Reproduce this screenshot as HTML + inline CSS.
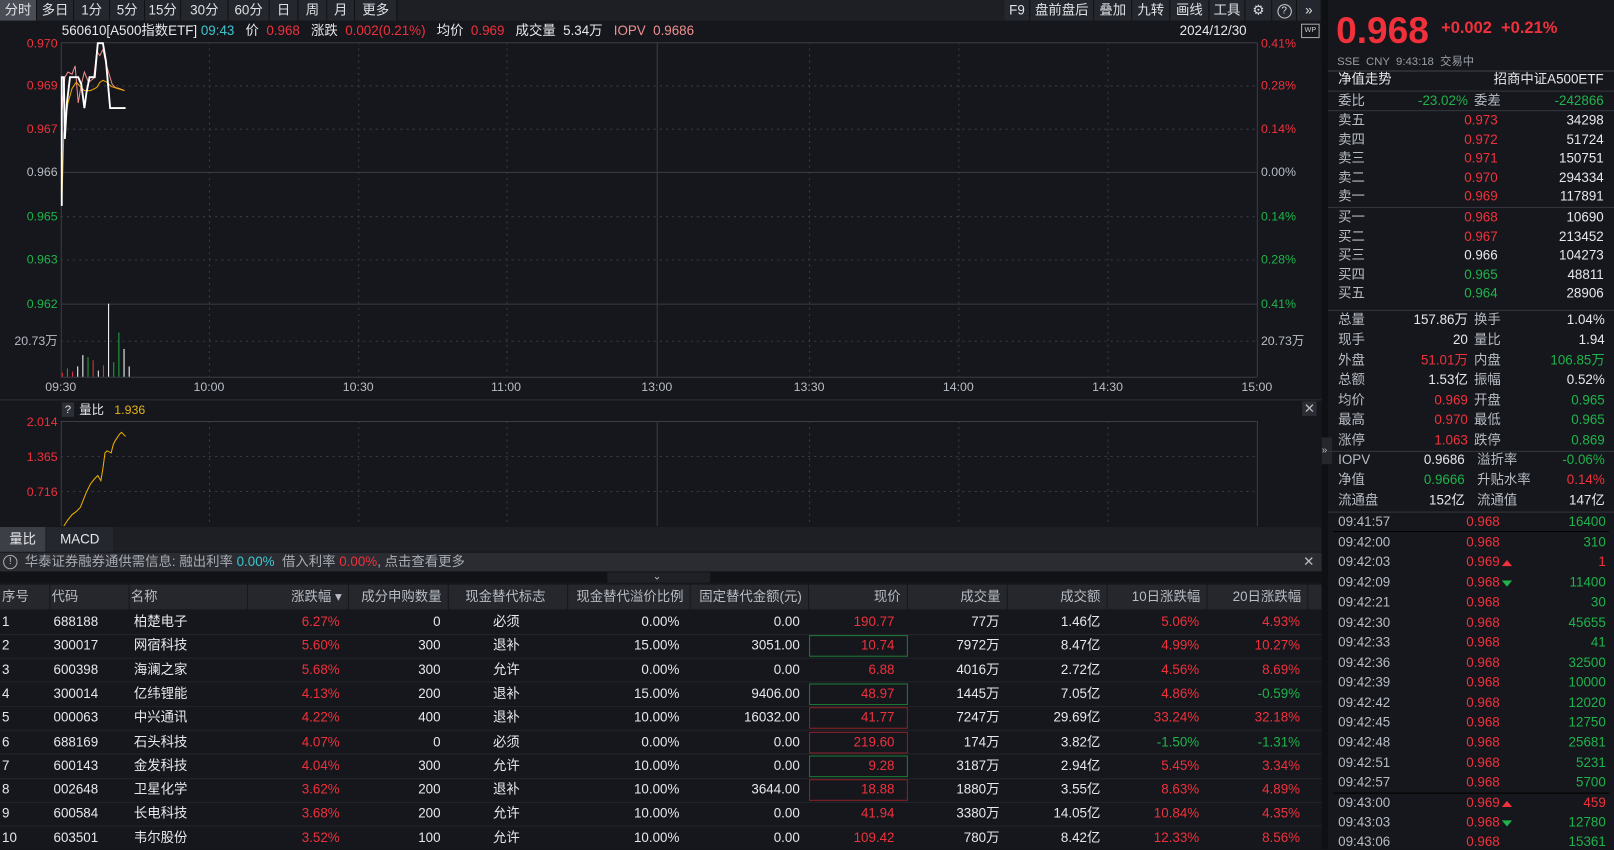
<!DOCTYPE html>
<html><head><meta charset="utf-8">
<style>
html,body{margin:0;padding:0;background:#15171c;width:1614px;height:849px;overflow:hidden}
#r{position:absolute;left:0;top:0;width:1568px;height:825px;transform:scale(1.02934);transform-origin:0 0;background:#15171c;font-family:"Liberation Sans","Noto Sans CJK SC",sans-serif;font-size:13px;color:#e2e4e8}
.a{position:absolute;white-space:nowrap;line-height:16px;height:16px}
.rt{text-align:right}
.R{color:#f0313c}.G{color:#1fb34b}.W{color:#e6e8ec}.L{color:#b8bcc4}.Y{color:#e5b318}.C{color:#3ec6d0}
.btn{position:absolute;top:0;height:20px;line-height:20px;background:#24272d;color:#dfe1e5;text-align:center;border-right:1px solid #111}
.hl{position:absolute;height:1px;background:#34373e}
</style></head><body><div id="r">

<div style="position:absolute;left:0;top:0;width:1284px;height:20px;background:#1d1f24"></div>
<div class="btn" style="left:0;width:35px;background:#4a4d55">分时</div>
<div class="btn" style="left:36px;width:35px">多日</div>
<div class="btn" style="left:72px;width:34px">1分</div>
<div class="btn" style="left:107px;width:33px">5分</div>
<div class="btn" style="left:141px;width:34px">15分</div>
<div class="btn" style="left:176px;width:45px">30分</div>
<div class="btn" style="left:222px;width:39px">60分</div>
<div class="btn" style="left:262px;width:27px">日</div>
<div class="btn" style="left:290px;width:27px">周</div>
<div class="btn" style="left:318px;width:26px">月</div>
<div class="btn" style="left:345px;width:40px">更多</div>
<div class="btn" style="left:976px;width:24px">F9</div>
<div class="btn" style="left:1001px;width:61px">盘前盘后</div>
<div class="btn" style="left:1063px;width:36px">叠加</div>
<div class="btn" style="left:1100px;width:36px">九转</div>
<div class="btn" style="left:1137px;width:37px">画线</div>
<div class="btn" style="left:1175px;width:34px">工具</div>
<div class="btn" style="left:1210px;width:25px">⚙</div>
<div class="btn" style="left:1236px;width:23px"><span style="display:inline-block;width:12px;height:12px;border:1px solid #ccc;border-radius:50%;line-height:12px;font-size:10px;vertical-align:middle">?</span></div>
<div class="btn" style="left:1260px;width:23px">»</div>

<svg style="position:absolute;left:0;top:0" width="1284" height="540">
<g stroke="#3a3d44" stroke-width="1" fill="none">
<line x1="59" y1="41.5" x2="1221" y2="41.5"/>
<line x1="59" y1="167.5" x2="1221" y2="167.5"/>
<line x1="59" y1="295.5" x2="1221" y2="295.5"/>
<line x1="59" y1="366.5" x2="1221" y2="366.5"/>
<line x1="59.5" y1="41" x2="59.5" y2="366"/>
<line x1="638.5" y1="41" x2="638.5" y2="366"/>
<line x1="1221.5" y1="41" x2="1221.5" y2="366"/>
<g stroke-dasharray="2,4">
<line x1="59" y1="83.5" x2="1221" y2="83.5"/><line x1="59" y1="125.5" x2="1221" y2="125.5"/>
<line x1="59" y1="210.5" x2="1221" y2="210.5"/><line x1="59" y1="252.5" x2="1221" y2="252.5"/>
<line x1="59" y1="331.5" x2="1221" y2="331.5"/>
<line x1="203.5" y1="41" x2="203.5" y2="366"/><line x1="348.5" y1="41" x2="348.5" y2="366"/>
<line x1="492.5" y1="41" x2="492.5" y2="366"/><line x1="786.5" y1="41" x2="786.5" y2="366"/>
<line x1="931.5" y1="41" x2="931.5" y2="366"/><line x1="1076.5" y1="41" x2="1076.5" y2="366"/>
<line x1="59" y1="443.5" x2="1221" y2="443.5"/><line x1="59" y1="477.5" x2="1221" y2="477.5"/>
<line x1="203.5" y1="409" x2="203.5" y2="511"/><line x1="348.5" y1="409" x2="348.5" y2="511"/>
<line x1="492.5" y1="409" x2="492.5" y2="511"/><line x1="786.5" y1="409" x2="786.5" y2="511"/>
<line x1="931.5" y1="409" x2="931.5" y2="511"/><line x1="1076.5" y1="409" x2="1076.5" y2="511"/>
</g>
<line x1="59" y1="409.5" x2="1221" y2="409.5"/>
<line x1="59.5" y1="409" x2="59.5" y2="511"/>
<line x1="638.5" y1="409" x2="638.5" y2="511"/>
<line x1="1221.5" y1="409" x2="1221.5" y2="511"/>
<line x1="0" y1="388.5" x2="1284" y2="388.5" stroke="#2c2f35"/>
</g>
<polyline fill="none" stroke="#f08a8a" stroke-width="1" points="60,110 63,75 66,70 70,72 73,64 76,100 79,82 82,70 86,80 91,76 94,50 97,54 100,48 103,62 106,72 109,82 112,85 116,86 121,88"/>
<polyline fill="none" stroke="#f0a800" stroke-width="1" points="60,200 62,130 66,100 70,86 74,80 78,84 82,88 88,88 94,85 97,80 100,78 104,80 108,84 114,86 121,88"/>
<polyline fill="none" stroke="#ffffff" stroke-width="1.8" points="60,200 60,75 62,75 63,135 65,100 68,75 72,75 76,75 79,82 82,105 84,90 87,75 92,75 95,42 100,42 103,60 107,105 110,105 122,105"/>
<g stroke-width="1">
<line x1="60.5" y1="366" x2="60.5" y2="362" stroke="#e8303a"/>
<line x1="65.5" y1="366" x2="65.5" y2="358" stroke="#1fa83f"/>
<line x1="70.5" y1="366" x2="70.5" y2="361" stroke="#e8303a"/>
<line x1="75.5" y1="366" x2="75.5" y2="356" stroke="#fff"/>
<line x1="80.5" y1="366" x2="80.5" y2="345" stroke="#fff"/>
<line x1="85.5" y1="366" x2="85.5" y2="347" stroke="#1fa83f"/>
<line x1="90.5" y1="366" x2="90.5" y2="350" stroke="#e8303a"/>
<line x1="95.5" y1="366" x2="95.5" y2="360" stroke="#fff"/>
<line x1="100.5" y1="366" x2="100.5" y2="355" stroke="#e8303a"/>
<line x1="105.5" y1="366" x2="105.5" y2="295" stroke="#fff"/>
<line x1="110.5" y1="366" x2="110.5" y2="352" stroke="#1fa83f"/>
<line x1="115.5" y1="366" x2="115.5" y2="323" stroke="#1fa83f"/>
<line x1="120.5" y1="366" x2="120.5" y2="339" stroke="#fff"/>
<line x1="125.5" y1="366" x2="125.5" y2="356" stroke="#fff"/>
</g>
<polyline fill="none" stroke="#f0b000" stroke-width="1" points="62,511 66,505 70,500 74,497 78,493 80,488 84,478 88,470 92,465 95,462 98,467 100,455 102,440 104,438 108,440 110,432 112,428 116,422 118,420 122,424"/>
</svg>

<div class="a W" style="left:60px;top:22px">560610[A500指数ETF] <span class="C">09:43</span> &nbsp;&nbsp;价 &nbsp;<span class="R">0.968</span> &nbsp;&nbsp;涨跌 &nbsp;<span class="R">0.002(0.21%)</span> &nbsp;&nbsp;均价 &nbsp;<span class="R">0.969</span> &nbsp;&nbsp;成交量 &nbsp;5.34万 &nbsp;&nbsp;<span style="color:#f09090">IOPV &nbsp;0.9686</span></div>
<div class="a W" style="left:1146px;top:22px">2024/12/30</div>
<div class="a" style="left:1264px;top:23px;width:16px;height:12px;border:1px solid #aaa;font-size:7px;line-height:12px;text-align:center;color:#ccc">WP</div>
<div class="a rt R" style="left:0;width:56px;top:34px;font-size:12px">0.970</div>
<div class="a rt R" style="left:0;width:56px;top:75px;font-size:12px">0.969</div>
<div class="a rt R" style="left:0;width:56px;top:117px;font-size:12px">0.967</div>
<div class="a rt L" style="left:0;width:56px;top:159px;font-size:12px">0.966</div>
<div class="a rt G" style="left:0;width:56px;top:202px;font-size:12px">0.965</div>
<div class="a rt G" style="left:0;width:56px;top:244px;font-size:12px">0.963</div>
<div class="a rt G" style="left:0;width:56px;top:287px;font-size:12px">0.962</div>
<div class="a rt L" style="left:0;width:56px;top:323px;font-size:12px">20.73万</div>
<div class="a R" style="left:1225px;top:34px;font-size:12px">0.41%</div>
<div class="a R" style="left:1225px;top:75px;font-size:12px">0.28%</div>
<div class="a R" style="left:1225px;top:117px;font-size:12px">0.14%</div>
<div class="a L" style="left:1225px;top:159px;font-size:12px">0.00%</div>
<div class="a G" style="left:1225px;top:202px;font-size:12px">0.14%</div>
<div class="a G" style="left:1225px;top:244px;font-size:12px">0.28%</div>
<div class="a G" style="left:1225px;top:287px;font-size:12px">0.41%</div>
<div class="a L" style="left:1225px;top:323px;font-size:12px">20.73万</div>
<div class="a L" style="left:44px;top:368px;font-size:12px">09:30</div>
<div class="a L" style="left:188px;top:368px;font-size:12px">10:00</div>
<div class="a L" style="left:333px;top:368px;font-size:12px">10:30</div>
<div class="a L" style="left:477px;top:368px;font-size:12px">11:00</div>
<div class="a L" style="left:623px;top:368px;font-size:12px">13:00</div>
<div class="a L" style="left:771px;top:368px;font-size:12px">13:30</div>
<div class="a L" style="left:916px;top:368px;font-size:12px">14:00</div>
<div class="a L" style="left:1061px;top:368px;font-size:12px">14:30</div>
<div class="a L" style="left:1206px;top:368px;font-size:12px">15:00</div>
<div class="a" style="left:60px;top:391px;width:12px;height:14px;line-height:14px;background:#2c2f36;text-align:center;font-size:11px">?</div>
<div class="a W" style="left:77px;top:390px;font-size:12px">量比 &nbsp;&nbsp;<span class="Y">1.936</span></div>
<div class="a rt R" style="left:0;width:56px;top:402px;font-size:12px">2.014</div>
<div class="a rt R" style="left:0;width:56px;top:436px;font-size:12px">1.365</div>
<div class="a rt R" style="left:0;width:56px;top:470px;font-size:12px">0.716</div>
<div class="a" style="left:1265px;top:390px;width:14px;height:14px;background:#2a2d33;color:#bbb;text-align:center;line-height:14px;font-size:13px">✕</div>
<div style="position:absolute;left:0;top:512px;width:1284px;height:24px;background:#1d1f24"></div>
<div class="a W" style="left:0;top:512px;width:44px;height:24px;line-height:24px;background:#3c3f46;text-align:center">量比</div>
<div class="a W" style="left:45px;top:512px;width:65px;height:24px;line-height:24px;background:#24272d;text-align:center">MACD</div>
<div style="position:absolute;left:0;top:537px;width:1284px;height:18px;background:#2a2c31"></div>
<div class="a" style="left:3px;top:539px;width:12px;height:12px;border:1px solid #aaa;border-radius:50%;line-height:12px;font-size:10px;text-align:center;color:#bbb">!</div>
<div class="a L" style="left:24px;top:538px;color:#a8acb4">华泰证券融券通供需信息: 融出利率 <span class="C">0.00%</span> &nbsp;借入利率 <span class="R">0.00%</span>, 点击查看更多</div>
<div class="a" style="left:1266px;top:538px;color:#bbb">✕</div>
<div style="position:absolute;left:0;top:556px;width:1284px;height:10px;background:#111215"></div>
<div style="position:absolute;left:590px;top:556px;width:100px;height:10px;background:#1f2126"></div>
<div class="a" style="left:634px;top:553px;font-size:10px;color:#bbb">⌄</div>

<div style="position:absolute;left:0;top:568px;width:1284px;height:24px;background:#25272c"></div>

<div style="position:absolute;left:1284px;top:0;width:6px;height:825px;background:#0f1013"></div>
<div style="position:absolute;left:1284px;top:425px;width:10px;height:26px;background:#25272c;color:#bbb;font-size:10px;line-height:26px">»</div>

<div class="a R" style="left:1298px;top:10px;height:40px;line-height:40px;font-size:36px;font-weight:bold">0.968</div>
<div class="a R" style="left:1400px;top:20px;font-size:16px;font-weight:bold">+0.002 &nbsp;+0.21%</div>
<div class="a L" style="left:1299px;top:52px;font-size:11px;color:#9a9ea6">SSE &nbsp;CNY &nbsp;9:43:18 &nbsp;交易中</div>
<div class="hl" style="left:1290px;top:68px;width:278px;background:#2a2d33;height:2px"></div>
<div class="a W" style="left:1300px;top:69px">净值走势</div>
<div class="a W rt" style="left:1400px;width:158px;top:69px">招商中证A500ETF</div>
<div class="hl" style="left:1290px;top:88px;width:278px"></div>
<div class="a L" style="left:1300px;top:90px">委比</div>
<div class="a G rt" style="left:1340px;width:86px;top:90px">-23.02%</div>
<div class="a L" style="left:1432px;top:90px">委差</div>
<div class="a G rt" style="left:1460px;width:98px;top:90px">-242866</div>
<div class="hl" style="left:1290px;top:107px;width:278px"></div>
</div>
<script>
var R=document.getElementById('r');
function T(x,y,txt,cls,w,st){var d=document.createElement('div');d.className='a '+(cls||'');d.style.top=(y-8)+'px';if(w){d.style.left=(x-w)+'px';d.style.width=w+'px';d.style.textAlign='right'}else d.style.left=x+'px';if(st)d.style.cssText+=st;d.innerHTML=txt;R.appendChild(d);return d}
function H(y,x,w,c){var d=document.createElement('div');d.className='hl';d.style.top=y+'px';d.style.left=(x==null?1290:x)+'px';d.style.width=(w||278)+'px';if(c)d.style.background=c;R.appendChild(d)}
var UP='<span style="display:inline-block;width:0;height:0;border-left:5px solid transparent;border-right:5px solid transparent;border-bottom:6px solid #f0313c;vertical-align:middle"></span>';
var DN='<span style="display:inline-block;width:0;height:0;border-left:5px solid transparent;border-right:5px solid transparent;border-top:6px solid #1fb34b;vertical-align:middle"></span>';
var sl=['卖五','卖四','卖三','卖二','卖一'],sp=['0.973','0.972','0.971','0.970','0.969'],sv=['34298','51724','150751','294334','117891'],sy=[117,136,154,173,191];
for(var i=0;i<5;i++){T(1300,sy[i],sl[i],'L');T(1455,sy[i],sp[i],'R',60);T(1558,sy[i],sv[i],'W',80)}
H(201);
var bl=['买一','买二','买三','买四','买五'],bp=['0.968','0.967','0.966','0.965','0.964'],bc=['R','R','W','G','G'],bv=['10690','213452','104273','48811','28906'],by=[211,230,248,267,285];
for(i=0;i<5;i++){T(1300,by[i],bl[i],'L');T(1455,by[i],bp[i],bc[i],60);T(1558,by[i],bv[i],'W',80)}
H(301);
var st=[['总量','157.86万','W','换手','1.04%','W'],['现手','20','W','量比','1.94','W'],['外盘','51.01万','R','内盘','106.85万','G'],['总额','1.53亿','W','振幅','0.52%','W'],['均价','0.969','R','开盘','0.965','G'],['最高','0.970','R','最低','0.965','G'],['涨停','1.063','R','跌停','0.869','G']];
var sty=[311,330,350,369,389,408,428];
for(i=0;i<7;i++){var s=st[i];T(1300,sty[i],s[0],'L');T(1426,sty[i],s[1],s[2],90);T(1432,sty[i],s[3],'L');T(1559,sty[i],s[4],s[5],90)}
H(438);
var io=[['IOPV','0.9686','W','溢折率','-0.06%','G'],['净值','0.9666','G','升贴水率','0.14%','R'],['流通盘','152亿','W','流通值','147亿','W']];
var ioy=[447,466,486];
for(i=0;i<3;i++){var s=io[i];T(1300,ioy[i],s[0],'L');T(1423,ioy[i],s[1],s[2],90);T(1435,ioy[i],s[3],'L');T(1559,ioy[i],s[4],s[5],90)}
H(497);
var tk=[['09:41:57','0.968','','16400','G'],['09:42:00','0.968','','310','G'],['09:42:03','0.969','u','1','R'],['09:42:09','0.968','d','11400','G'],['09:42:21','0.968','','30','G'],['09:42:30','0.968','','45655','G'],['09:42:33','0.968','','41','G'],['09:42:36','0.968','','32500','G'],['09:42:39','0.968','','10000','G'],['09:42:42','0.968','','12020','G'],['09:42:45','0.968','','12750','G'],['09:42:48','0.968','','25681','G'],['09:42:51','0.968','','5231','G'],['09:42:57','0.968','','5700','G'],['09:43:00','0.969','u','459','R'],['09:43:03','0.968','d','12780','G'],['09:43:06','0.968','','15361','G']];
var ty=[507,527,546,566,585,605,624,644,663,683,702,721,741,760,780,799,818];
for(i=0;i<tk.length;i++){var k=tk[i];T(1300,ty[i],k[0],'L');T(1457,ty[i],k[1],'R',60);if(k[2]=='u')T(1459,ty[i],UP,'');if(k[2]=='d')T(1459,ty[i],DN,'');T(1560,ty[i],k[3],k[4],80)}
H(516,1295,268,'#000');H(770,1295,268,'#000');
var hs=[[0,48,'序号','l'],[48,125,'代码','l'],[125,240,'名称','l'],[240,338,'涨跌幅 ▾','r'],[338,435,'成分申购数量','r'],[435,551,'现金替代标志','c'],[551,670,'现金替代溢价比例','r'],[670,785,'固定替代金额(元)','r'],[785,881,'现价','r'],[881,978,'成交量','r'],[978,1075,'成交额','r'],[1075,1172,'10日涨跌幅','r'],[1172,1270,'20日涨跌幅','r']];
hs.forEach(function(h){var d=document.createElement('div');d.className='a L';d.style.cssText+='top:572px;left:'+(h[0]+2)+'px;width:'+(h[1]-h[0]-8)+'px;text-align:'+(h[3]=='l'?'left':h[3]=='r'?'right':'center')+';';d.innerHTML=h[2];R.appendChild(d);var s=document.createElement('div');s.style.cssText='position:absolute;top:568px;height:24px;width:1px;background:#15171c;left:'+h[1]+'px';R.appendChild(s)});
var rows=[['1','688188','柏楚电子','6.27%','0','必须','0.00%','0.00','190.77','77万','1.46亿','5.06%','R','4.93%','R',''],
['2','300017','网宿科技','5.60%','300','退补','15.00%','3051.00','10.74','7972万','8.47亿','4.99%','R','10.27%','R','g'],
['3','600398','海澜之家','5.68%','300','允许','0.00%','0.00','6.88','4016万','2.72亿','4.56%','R','8.69%','R',''],
['4','300014','亿纬锂能','4.13%','200','退补','15.00%','9406.00','48.97','1445万','7.05亿','4.86%','R','-0.59%','G','g'],
['5','000063','中兴通讯','4.22%','400','退补','10.00%','16032.00','41.77','7247万','29.69亿','33.24%','R','32.18%','R','r'],
['6','688169','石头科技','4.07%','0','必须','0.00%','0.00','219.60','174万','3.82亿','-1.50%','G','-1.31%','G','r'],
['7','600143','金发科技','4.04%','300','允许','10.00%','0.00','9.28','3187万','2.94亿','5.45%','R','3.34%','R','g'],
['8','002648','卫星化学','3.62%','200','退补','10.00%','3644.00','18.88','1880万','3.55亿','8.63%','R','4.89%','R','r'],
['9','600584','长电科技','3.68%','200','允许','10.00%','0.00','41.94','3380万','14.05亿','10.84%','R','4.35%','R',''],
['10','603501','韦尔股份','3.52%','100','允许','10.00%','0.00','109.42','780万','8.42亿','12.33%','R','8.56%','R','']];
for(i=0;i<rows.length;i++){var r=rows[i],y=604+i*23.3;
if(i>0)H(y-11.6,0,1284,'#22252a');
T(2,y,r[0],'W');T(52,y,r[1],'W');T(130,y,r[2],'W');T(330,y,r[3],'R',80);T(428,y,r[4],'W',80);
var c=T(451,y,r[5],'W',0);c.style.width='82px';c.style.textAlign='center';
T(660,y,r[6],'W',100);T(777,y,r[7],'W',100);T(869,y,r[8],'R',80);T(971,y,r[9],'W',80);T(1069,y,r[10],'W',80);T(1165,y,r[11],r[12],80);T(1263,y,r[13],r[14],80);
if(r[15]){var b=document.createElement('div');b.style.cssText='position:absolute;left:786px;width:94px;height:19px;top:'+(y-10)+'px;border:1px solid '+(r[15]=='g'?'#1d7a36':'#8a2229');R.appendChild(b)}}
</script>
</body></html>
